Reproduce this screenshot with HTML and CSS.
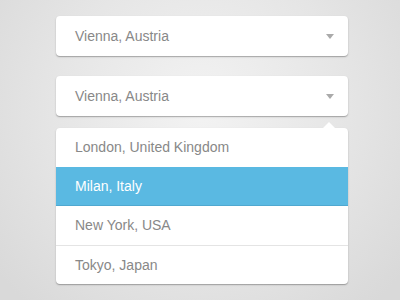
FILE: index.html
```html
<!DOCTYPE html>
<html lang="en">
<head>
    <meta charset="UTF-8">
    <title>Dropdown</title>
    <link rel="stylesheet" href="styles.css">
</head>
<body>
    <div class="container">
        <div class="select">
            <span>Vienna, Austria</span>
            <span class="caret"></span>
        </div>

        <div class="select">
            <span>Vienna, Austria</span>
            <span class="caret"></span>
        </div>

        <ul class="dropdown">
            <li>London, United Kingdom</li>
            <li class="active">Milan, Italy</li>
            <li>New York, USA</li>
            <li>Tokyo, Japan</li>
        </ul>
    </div>
</body>
</html>
```

FILE: styles.css
```css
html, body {
    height: 100%;
}

body {
    margin: 0;
    font-family: "Liberation Sans", Arial, sans-serif;
    background: radial-gradient(circle at 200px 110px, #f3f3f3 0, #e6e6e6 140px, #d9d9d9 260px);
}

.container {
    width: 292px;
    margin-left: 56px;
    padding-top: 16px;
}

.select {
    display: flex;
    justify-content: space-between;
    align-items: center;
    height: 40px;
    padding: 0 14px 0 19px;
    margin-bottom: 20px;
    box-sizing: border-box;
    background-color: #fff;
    border-radius: 4px;
    box-shadow: 0 1px 1px rgba(0, 0, 0, 0.25), 0 1px 3px rgba(0, 0, 0, 0.08);
    font-size: 14px;
    color: #888;
}

.caret {
    width: 0;
    height: 0;
    border-left: 4px solid transparent;
    border-right: 4px solid transparent;
    border-top: 5px solid #aaa;
}

.dropdown {
    position: relative;
    list-style: none;
    margin: -8px 0 0;
    padding: 0;
    background-color: #fff;
    border-radius: 4px;
    box-shadow: 0 1px 1px rgba(0, 0, 0, 0.25), 0 1px 3px rgba(0, 0, 0, 0.08);
}

.dropdown::before {
    content: "";
    position: absolute;
    top: -6px;
    right: 13px;
    border-left: 6px solid transparent;
    border-right: 6px solid transparent;
    border-bottom: 6px solid #fff;
}

.dropdown li {
    height: 39px;
    line-height: 39px;
    padding-left: 19px;
    font-size: 14px;
    color: #888;
    box-sizing: border-box;
}

.dropdown li + li {
    border-top: 1px solid #e4e4e4;
}

.dropdown li.active {
    background-color: #5ab9e2;
    color: #fff;
    border-top: none;
    border-bottom: 1px solid #4fa8d0;
}

.dropdown li.active + li {
    border-top: none;
}
```
